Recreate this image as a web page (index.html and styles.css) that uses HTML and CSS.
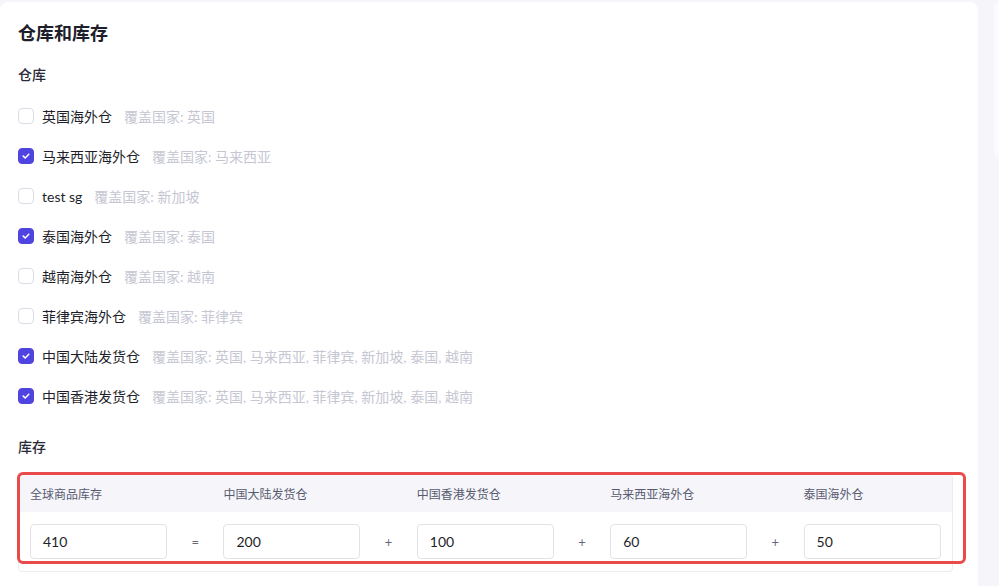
FILE: index.html
```html
<!DOCTYPE html>
<html lang="zh">
<head>
<meta charset="utf-8">
<link rel="stylesheet" href="styles.css">
</head>
<body>
<div class="page">
  <main class="card">
    <h1 class="title">仓库和库存</h1>
    <h2 class="section">仓库</h2>
    <ul class="wh-list">
      <li class="wh"><span class="cb"></span><span class="name">英国海外仓</span><span class="cover">覆盖国家: 英国</span></li>
      <li class="wh"><span class="cb on"><svg viewBox="0 0 16 16"><path d="M5.2 8.1l2 1.9 3.6-3.8"/></svg></span><span class="name">马来西亚海外仓</span><span class="cover">覆盖国家: 马来西亚</span></li>
      <li class="wh"><span class="cb"></span><span class="name">test sg</span><span class="cover">覆盖国家: 新加坡</span></li>
      <li class="wh"><span class="cb on"><svg viewBox="0 0 16 16"><path d="M5.2 8.1l2 1.9 3.6-3.8"/></svg></span><span class="name">泰国海外仓</span><span class="cover">覆盖国家: 泰国</span></li>
      <li class="wh"><span class="cb"></span><span class="name">越南海外仓</span><span class="cover">覆盖国家: 越南</span></li>
      <li class="wh"><span class="cb"></span><span class="name">菲律宾海外仓</span><span class="cover">覆盖国家: 菲律宾</span></li>
      <li class="wh"><span class="cb on"><svg viewBox="0 0 16 16"><path d="M5.2 8.1l2 1.9 3.6-3.8"/></svg></span><span class="name">中国大陆发货仓</span><span class="cover">覆盖国家: 英国, 马来西亚, 菲律宾, 新加坡, 泰国, 越南</span></li>
      <li class="wh"><span class="cb on"><svg viewBox="0 0 16 16"><path d="M5.2 8.1l2 1.9 3.6-3.8"/></svg></span><span class="name">中国香港发货仓</span><span class="cover">覆盖国家: 英国, 马来西亚, 菲律宾, 新加坡, 泰国, 越南</span></li>
    </ul>
    <h2 class="section stock-title">库存</h2>
    <div class="stock">
      <div class="stock-table">
        <div class="stock-head">
          <span>全球商品库存</span><span></span>
          <span>中国大陆发货仓</span><span></span>
          <span>中国香港发货仓</span><span></span>
          <span>马来西亚海外仓</span><span></span>
          <span>泰国海外仓</span>
        </div>
        <div class="stock-row">
          <div class="inp">410</div><span class="op">=</span>
          <div class="inp">200</div><span class="op">+</span>
          <div class="inp">100</div><span class="op">+</span>
          <div class="inp">60</div><span class="op">+</span>
          <div class="inp">50</div>
        </div>
      </div>
      <div class="highlight"></div>
    </div>
  </main>
  <aside class="side"></aside>
</div>
</body>
</html>
```
FILE: styles.css
```css
* { box-sizing: border-box; }
html, body { margin: 0; padding: 0; }
body {
  background: #f5f5fa;
  font-family: "Lato", "Noto Sans CJK SC", sans-serif;
  color: #1e1f2b;
  width: 999px;
  height: 586px;
  overflow: hidden;
}
.page {
  display: flex;
  align-items: flex-start;
  gap: 16px;
}
.card {
  flex: 0 0 978px;
  margin-top: 2px;
  background: #fff;
  border-radius: 8px;
  padding: 19px 0 40px 18px;
  min-height: 600px;
}
.side {
  flex: 0 0 40px;
  height: 160px;
  background: #fbfbfe;
  border-radius: 8px;
}
.title {
  margin: 0;
  font-size: 18px;
  line-height: 24px;
  font-weight: 700;
  color: #1e1f2b;
}
.section {
  margin: 20px 0 0;
  font-size: 14px;
  line-height: 20px;
  font-weight: 500;
  color: #2a2b38;
}
.wh-list {
  list-style: none;
  margin: 11px 0 0;
  padding: 0;
}
.wh {
  height: 40px;
  display: flex;
  align-items: center;
  font-size: 14px;
}
.cb {
  width: 16px;
  height: 16px;
  border: 1px solid #dcdce4;
  border-radius: 4px;
  margin-right: 8px;
  display: flex;
  align-items: center;
  justify-content: center;
  background: #fff;
}
.cb.on {
  background: #5044e0;
  border-color: #5044e0;
}
.cb svg { width: 16px; height: 16px; flex: none; }
.cb svg path {
  fill: none;
  stroke: #fff;
  stroke-width: 1.5;
  stroke-linecap: round;
  stroke-linejoin: round;
}
.name { color: #1e1f2b; }
.cover { color: #c6c7d3; margin-left: 12px; }
.stock-title { margin-top: 21px; }
.stock {
  position: relative;
  margin-top: 17px;
  width: 935px;
}
.stock-table {
  border: 1px solid #ebebf0;
  border-radius: 4px;
  overflow: hidden;
}
.stock-head, .stock-row {
  display: grid;
  grid-template-columns: 137px 56.4px 137px 56.4px 137px 56.4px 137px 56.4px 137px;
  padding: 0 10px 0 11px;
}
.stock-head {
  background: #f5f5fa;
  height: 37px;
  align-items: center;
  font-size: 12px;
  color: #585b70;
}
.stock-row {
  padding-top: 12px;
  padding-bottom: 12px;
  align-items: center;
}
.inp {
  height: 35px;
  border: 1px solid #e2e2e8;
  border-radius: 4px;
  padding-left: 12px;
  display: flex;
  align-items: center;
  font-size: 14px;
  color: #1e1f2b;
}
.op {
  text-align: center;
  font-size: 13px;
  color: #666877;
}
.highlight {
  position: absolute;
  left: -1px;
  top: -2px;
  width: 949px;
  height: 92px;
  border: 3px solid #e94b4b;
  border-radius: 6px;
  pointer-events: none;
}
```
